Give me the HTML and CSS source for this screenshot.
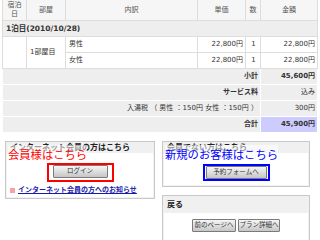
FILE: index.html
```html
<!DOCTYPE html>
<html lang="ja">
<head>
  <meta charset="UTF-8" />
  <title>ご予約内容の確認</title>
  <link rel="stylesheet" href="styles.css">
</head>
<body>
  <table class="bill">
    <colgroup>
      <col class="c-date"><col class="c-room"><col class="c-item"><col class="c-price"><col class="c-num"><col class="c-sum">
    </colgroup>
    <thead>
      <tr><th>宿泊日</th><th>部屋</th><th>内訳</th><th>単価</th><th>数</th><th>金額</th></tr>
    </thead>
    <tbody>
      <tr class="night"><td colspan="6">1泊目(2010/10/28)</td></tr>
      <tr>
        <td rowspan="2"></td>
        <td rowspan="2">1部屋目</td>
        <td>男性</td>
        <td class="num">22,800円</td>
        <td class="cnt">1</td>
        <td class="num">22,800円</td>
      </tr>
      <tr>
        <td>女性</td>
        <td class="num">22,800円</td>
        <td class="cnt">1</td>
        <td class="num">22,800円</td>
      </tr>
      <tr class="sum">
        <td colspan="5" class="num strong">小計</td>
        <td class="num strong">45,600円</td>
      </tr>
      <tr class="sum">
        <td colspan="5" class="num strong">サービス料</td>
        <td class="num">込み</td>
      </tr>
      <tr class="sum">
        <td colspan="5" class="num">入湯税 （ 男性 ：150円 女性 ：150円 ）</td>
        <td class="num">300円</td>
      </tr>
      <tr class="sum">
        <td colspan="5" class="num strong">合計</td>
        <td class="num strong grand">45,900円</td>
      </tr>
    </tbody>
  </table>

  <div class="panels">
    <div class="box member">
      <div class="box-head">インターネット会員の方はこちら</div>
      <div class="box-body">
        <span class="mark red"><button class="btn login">ログイン</button></span>
      </div>
      <a class="notice" href="#"><span class="sq"></span>インターネット会員の方へのお知らせ</a>
      <div class="note red-note">会員様はこちら</div>
    </div>

    <div class="side">
      <div class="box guest">
        <div class="box-head">会員でない方はこちら</div>
        <div class="box-body">
          <span class="mark blue"><button class="btn form">予約フォームへ</button></span>
        </div>
        <div class="note blue-note">新規のお客様はこちら</div>
      </div>

      <div class="box back">
        <div class="box-head big">戻る</div>
        <div class="box-body row">
          <button class="btn prev">前のページへ</button>
          <button class="btn plan">プラン詳細へ</button>
        </div>
      </div>
    </div>
  </div>
</body>
</html>
```

FILE: styles.css
```css
body {
  margin: 0;
  font-family: "DejaVu Sans", "Noto Sans CJK JP", sans-serif;
  font-size: 7px;
  color: #333;
  background: #fff;
  overflow: hidden;
}

/* 明細テーブル */
.bill {
  border-collapse: collapse;
  table-layout: fixed;
  width: 315px;
  margin: -1px 0 0 2px;
}

.c-date { width: 24px; }
.c-room { width: 39px; }
.c-item { width: 132px; }
.c-price { width: 48px; }
.c-num { width: 15px; }
.c-sum { width: 57px; }

.bill th,
.bill td {
  border: 1px solid #ddd;
  padding: 0 2px 0 3px;
  height: 15px;
  line-height: 9px;
  white-space: nowrap;
}

.bill th {
  height: 20px;
  background: #f6f6f6;
  font-weight: normal;
  color: #555;
  white-space: normal;
  padding: 0 2px;
}

.night td {
  background: #eee;
  font-weight: bold;
  font-size: 7.5px;
}

.sum td {
  background: #eee;
  border-color: #fff;
}

.num { text-align: right; }
.cnt { text-align: center; }
.strong { font-weight: bold; }

.sum td.grand {
  background: #ccf;
}

/* 下のボックス */
.panels {
  display: flex;
  gap: 7px;
  padding: 8px 0 0 5px;
  align-items: flex-start;
}

.side {
  display: flex;
  flex-direction: column;
  gap: 8px;
  width: 148px;
}

.box {
  position: relative;
  border: 1px solid #c8c8c8;
  box-shadow: inset 0 0 0 1px #f2f2f2;
  background: #fff;
}

.member { width: 150px; box-sizing: border-box; }

.box-head {
  background: #f0f0f0;
  height: 11px;
  line-height: 11px;
  padding-left: 4px;
  font-size: 8px;
  font-weight: bold;
  color: #222;
}

.box-head.big {
  height: 17px;
  line-height: 17px;
  font-size: 8px;
}

.box-body {
  display: flex;
  justify-content: center;
}

.member .box-body { padding-top: 10px; }
.guest .box-body { padding: 11px 0 5px; }
.back .box-body { padding: 6px 0 20px; gap: 2px; }

.mark {
  display: inline-flex;
  border: 2px solid;
}

.mark.red {
  border-color: #f00;
  padding: 0 4px 2px;
}

.mark.blue {
  border-color: #00f;
  padding: 0 1px;
}

.btn {
  height: 13px;
  padding: 0;
  border: 1px solid #7a7a7a;
  border-radius: 1px;
  background: linear-gradient(#f6f6f6, #c6c6c6);
  font-family: "DejaVu Sans", "Noto Sans CJK JP", sans-serif;
  font-size: 6.5px;
  line-height: 11px;
  color: #333;
}

.login { width: 55px; }
.form { width: 61px; }
.prev { width: 44px; }
.plan { width: 42px; }

.notice {
  display: flex;
  align-items: center;
  gap: 3px;
  margin: 4px 0 4px 4px;
  font-size: 7px;
  line-height: 8px;
  font-weight: bold;
  color: #1a1aa8;
}

.sq {
  width: 5px;
  height: 5px;
  background: #f7a3a3;
}

/* 注釈ラベル */
.note {
  position: absolute;
  top: 3px;
  left: 2px;
  padding-top: 4px;
  font-size: 11.3px;
  line-height: 14px;
  background: rgba(255, 255, 255, 0.55);
}

.red-note { color: #f00; }
.blue-note { color: #00f; }
```
